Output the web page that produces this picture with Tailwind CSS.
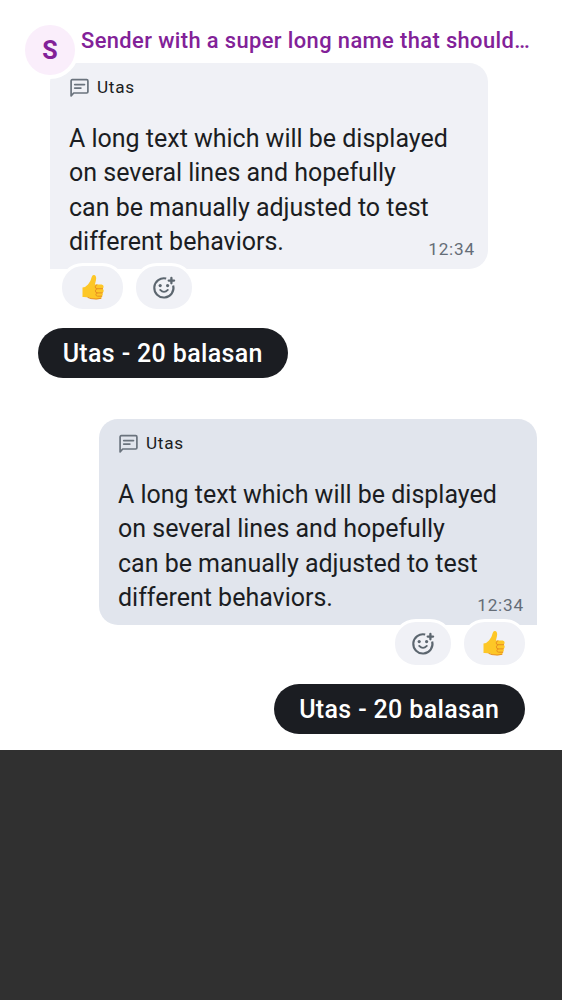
<!DOCTYPE html>
<html lang="id">
<head>
<meta charset="utf-8">
<title>Utas</title>
<script src="https://cdn.jsdelivr.net/npm/@tailwindcss/browser@4"></script>
</head>
<body class="min-h-screen bg-[#303030] font-['Roboto','Noto_Sans',sans-serif] text-[#1b1d22]">
<svg class="hidden">
  <symbol id="thread" viewBox="0 0 20 20">
    <path d="M1.6 17.9V2.9q0-1.2 1.2-1.2h14.4q1.2 0 1.2 1.2v10.9q0 1.2-1.2 1.2H4.2z" fill="none" stroke="currentColor" stroke-width="1.7" stroke-linejoin="round"/>
    <path d="M5.3 6.6h9.6M5.3 10.1h6" fill="none" stroke="currentColor" stroke-width="1.9" stroke-linecap="round"/>
  </symbol>
  <symbol id="react" viewBox="0 0 24 24">
    <path d="M14.2 2.6A9.6 9.6 0 1 0 21.2 9.6" fill="none" stroke="currentColor" stroke-width="2.1"/>
    <path d="M19.4 1.9v5.4M16.7 4.6h5.4" fill="none" stroke="currentColor" stroke-width="2.3" stroke-linecap="round"/>
    <circle cx="8.2" cy="9.6" r="1.6" fill="currentColor"/>
    <circle cx="15.6" cy="9.6" r="1.6" fill="currentColor"/>
    <path d="M8.2 13.9q3.8 4 7.6 0" fill="none" stroke="currentColor" stroke-width="1.9" stroke-linecap="round"/>
  </symbol>
  <symbol id="thumb" viewBox="0 0 24 26">
    <path d="M1.5 13.5Q5 13 7 10.5Q9.8 7.5 10.8 2.8Q11.4.6 13.2 1Q15.8 1.8 15 6L13.9 10.4H20.6Q22.7 10.8 22.6 12.8Q22.5 14.1 21.6 14.7Q23.3 15.6 22.5 17.8Q22.1 18.7 21.4 19Q22.5 20.6 21.1 22Q20.8 24.4 18.2 25Q12 25.6 8 23.6Q5 22.8 1.5 23z" fill="#fdc727"/>
    <path d="M21.6 14.7h-5.4q-2-.1-2-1.8t1.7-2.1M21.3 18.9h-5q-2-.3-1.9-2t1.7-2.2M20.8 22.2h-4.2q-1.7-.2-1.7-1.5t1.3-1.7M20 24.4q-5 1.2-10 .2l-3-1.1" fill="none" stroke="#e88f20" stroke-width="1" stroke-linecap="round"/>
  </symbol>
</svg>

<main class="h-[750px] bg-white overflow-hidden">
  <section class="relative pl-[50px] pt-[63px]">
    <div class="absolute left-[81px] top-[25px] whitespace-nowrap text-[21.9px] leading-[31px] tracking-[0.39px] font-medium text-[#822198]">Sender with a super long name that should…</div>
    <div class="h-[206px] w-[438px] rounded-[19px] rounded-bl-none bg-[#f0f1f6] pl-[19px] pr-[12px] pt-[13px]">
      <div class="flex h-[22px] items-center gap-[7px]">
        <svg class="mt-px h-[20px] w-[21px] text-[#6a737d]"><use href="#thread"/></svg>
        <span class="pt-[2px] text-[17.2px] tracking-[0.7px]">Utas</span>
      </div>
      <p class="mt-[24px] whitespace-nowrap text-[25px] leading-[34.4px] tracking-[-0.01px]">A long text which will be displayed<br>on several lines and hopefully<br>can be manually adjusted to test<br>different behaviors.</p>
      <div class="-mt-[23px] pr-px text-right text-[17.2px] leading-[24px] tracking-[0.8px] text-[#656d77]">12:34</div>
    </div>
    <div class="absolute left-[21px] top-[21px] flex size-[58px] items-center justify-center rounded-full border-4 border-white bg-[#faeefb] pt-px text-[25px] font-bold text-[#822198]">S</div>
  </section>
  <div class="relative -mt-[6px] flex gap-[7px] pl-[59px]">
    <div class="flex h-[49px] w-[67px] items-center justify-center rounded-[24px] border-3 border-white bg-[#f0f1f6] pb-px"><svg class="h-[26px] w-[24px]"><use href="#thumb"/></svg></div>
    <div class="flex h-[49px] w-[62px] items-center justify-center rounded-[24px] border-3 border-white bg-[#f0f1f6]"><svg class="size-[24px] text-[#5c666f]"><use href="#react"/></svg></div>
  </div>
  <div class="mt-[16px] ml-[37.5px] flex h-[50px] w-[250.5px] items-center justify-center rounded-full bg-[#1b1d22] pt-px text-[25px] font-medium tracking-[0.35px] text-white">Utas - 20 balasan</div>

  <section class="mt-[41px] ml-[99px] h-[206px] w-[438px] rounded-[19px] rounded-br-none bg-[#e1e5ed] pl-[19px] pr-[12px] pt-[13px]">
    <div class="flex h-[22px] items-center gap-[7px]">
      <svg class="mt-px h-[20px] w-[21px] text-[#6a737d]"><use href="#thread"/></svg>
      <span class="pt-[2px] text-[17.2px] tracking-[0.7px]">Utas</span>
    </div>
    <p class="mt-[24px] whitespace-nowrap text-[25px] leading-[34.4px] tracking-[-0.01px]">A long text which will be displayed<br>on several lines and hopefully<br>can be manually adjusted to test<br>different behaviors.</p>
    <div class="-mt-[23px] pr-px text-right text-[17.2px] leading-[24px] tracking-[0.8px] text-[#656d77]">12:34</div>
  </section>
  <div class="relative -mt-[6px] flex justify-end gap-[7px] pr-[34.5px]">
    <div class="flex h-[49px] w-[62px] items-center justify-center rounded-[24px] border-3 border-white bg-[#f0f1f6]"><svg class="size-[24px] text-[#5c666f]"><use href="#react"/></svg></div>
    <div class="flex h-[49px] w-[67px] items-center justify-center rounded-[24px] border-3 border-white bg-[#f0f1f6] pb-px"><svg class="h-[26px] w-[24px]"><use href="#thumb"/></svg></div>
  </div>
  <div class="mt-[16px] mr-[37.5px] ml-auto flex h-[50px] w-[250.5px] items-center justify-center rounded-full bg-[#1b1d22] pt-px text-[25px] font-medium tracking-[0.35px] text-white">Utas - 20 balasan</div>
</main>
</body>
</html>
